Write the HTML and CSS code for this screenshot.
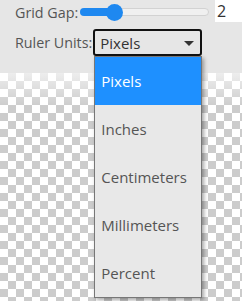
FILE: index.html
```html
<!DOCTYPE html>
<html lang="en">
<head>
    <meta charset="UTF-8">
    <meta name="viewport" content="width=device-width, initial-scale=1.0">
    <title>Ruler Settings</title>
    <link rel="stylesheet" href="styles.css">
</head>
<body>
    <div class="settings-panel">
        <div class="setting-row">
            <span class="setting-label">Grid Gap:</span>
            <div class="slider">
                <div class="slider-fill"></div>
                <div class="slider-thumb"></div>
            </div>
            <div class="slider-value">2</div>
        </div>

        <div class="setting-row units-row">
            <span class="setting-label">Ruler Units:</span>
            <div class="select-wrap">
                <div class="select-box">
                    <span>Pixels</span>
                    <span class="select-arrow"></span>
                </div>
                <ul class="select-menu">
                    <li class="option selected">Pixels</li>
                    <li class="option">Inches</li>
                    <li class="option">Centimeters</li>
                    <li class="option">Millimeters</li>
                    <li class="option">Percent</li>
                </ul>
            </div>
        </div>
    </div>
</body>
</html>
```

FILE: styles.css
```css
* {
    margin: 0;
    padding: 0;
    box-sizing: border-box;
}

body {
    font-family: 'Open Sans', 'Liberation Sans', sans-serif;
    font-size: 14px;
    color: #555;
    min-height: 100vh;
    overflow: hidden;
    background-color: #fff;
    background-image:
        linear-gradient(45deg, #ccc 25%, transparent 25%, transparent 75%, #ccc 75%),
        linear-gradient(45deg, #ccc 25%, transparent 25%, transparent 75%, #ccc 75%);
    background-size: 16px 16px;
    background-position: 0 -7px, 8px 1px;
}

.settings-panel {
    position: relative;
    background: #e6e6e6;
    height: 73px;
    padding-left: 15px;
    display: flex;
    flex-direction: column;
    gap: 5px;
}

.settings-panel::after {
    content: '';
    position: absolute;
    left: 0;
    right: 0;
    top: 73px;
    height: 34px;
    background: linear-gradient(180deg, rgba(255, 255, 255, 0.65), rgba(255, 255, 255, 0));
    pointer-events: none;
}

.setting-row {
    display: flex;
    align-items: center;
    height: 24px;
}

.units-row {
    height: 27px;
}

.setting-label {
    white-space: nowrap;
    font-size: 14.3px;
}

.slider {
    position: relative;
    width: 144px;
    height: 8px;
    margin-left: 2px;
    background: #f0f0f0;
    border: 1px solid #d2d2d2;
    border-radius: 4px;
}

.slider-fill {
    position: absolute;
    left: -1px;
    top: -1px;
    width: 36px;
    height: 8px;
    background: #1e88f0;
    border-radius: 4px;
}

.slider-thumb {
    position: absolute;
    left: 25px;
    top: -5px;
    width: 17px;
    height: 17px;
    background: #1e88f0;
    border-radius: 50%;
}

.slider-value {
    margin-left: 6px;
    align-self: flex-start;
    height: 22px;
    width: 30px;
    padding-left: 2px;
    background: #fff;
    color: #333;
    font-size: 16px;
    line-height: 22px;
}

.select-wrap {
    position: relative;
    margin-left: 1px;
}

.select-box {
    width: 109px;
    height: 27px;
    border: 2px solid #111;
    border-radius: 3px;
    padding: 0 6px 0 5px;
    display: flex;
    align-items: center;
    justify-content: space-between;
    color: #333;
    font-size: 15px;
}

.select-arrow {
    width: 0;
    height: 0;
    border-left: 5px solid transparent;
    border-right: 5px solid transparent;
    border-top: 5px solid #333;
    margin-top: 2px;
}

.select-menu {
    list-style: none;
    position: absolute;
    top: 27px;
    left: 1px;
    width: 108px;
    background: #e8e8e8;
    border: 1px solid #777;
    box-shadow: 2px 2px 4px rgba(0, 0, 0, 0.35);
    z-index: 2;
}

.option {
    height: 48px;
    line-height: 48px;
    padding-left: 6px;
    color: #555;
    font-size: 15px;
}

.option.selected {
    background: #1e90ff;
    color: #fff;
}
```
